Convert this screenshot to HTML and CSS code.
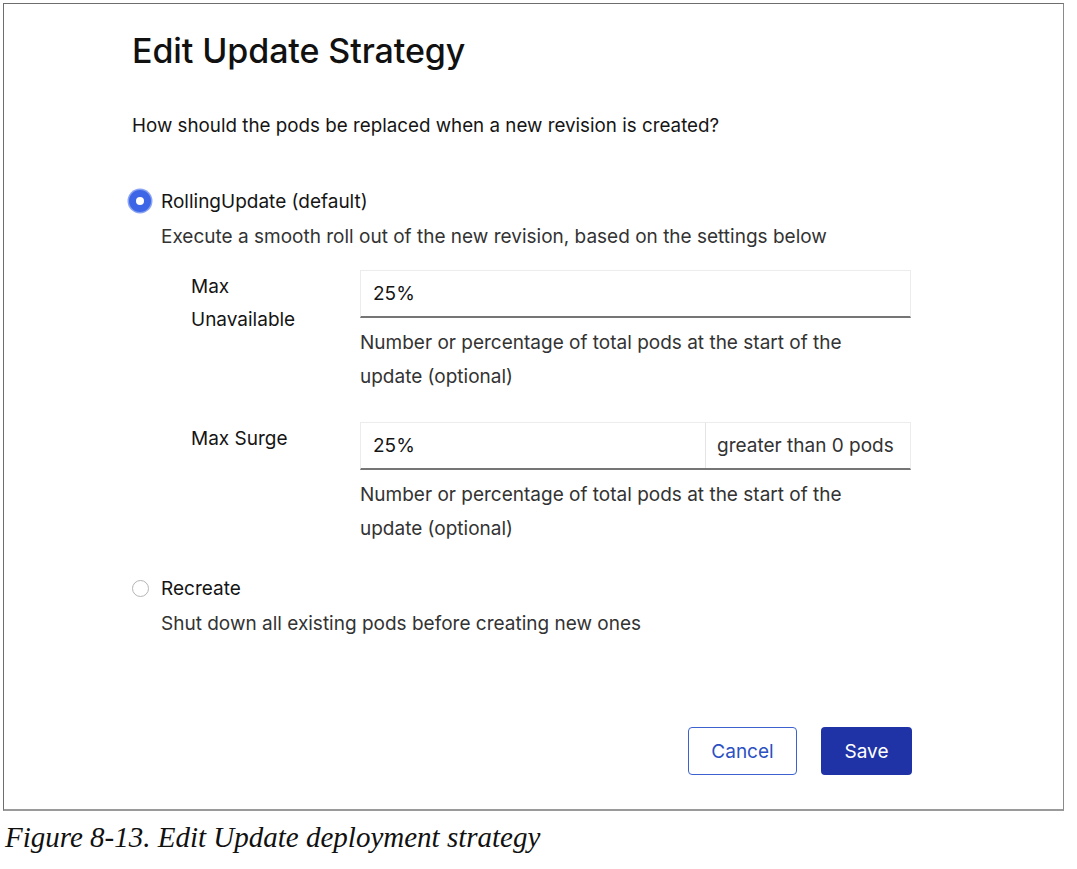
FILE: index.html
```html
<!DOCTYPE html>
<html>
<head>
<meta charset="utf-8">
<link rel="stylesheet" href="styles.css">
</head>
<body>
<div class="frame">
  <div class="modal">
    <h1 class="title">Edit Update Strategy</h1>
    <p class="question">How should the pods be replaced when a new revision is created?</p>

    <div class="option">
      <div class="option-head">
        <span class="radio radio-on"><span class="dot"></span></span>
        <span class="option-label">RollingUpdate (default)</span>
      </div>
      <div class="option-desc">Execute a smooth roll out of the new revision, based on the settings below</div>

      <div class="fields">
        <div class="field">
          <div class="field-label">Max<br>Unavailable</div>
          <div class="field-body">
            <div class="input-group">
              <div class="input">25%</div>
            </div>
            <div class="help">Number or percentage of total pods at the start of the<br>update (optional)</div>
          </div>
        </div>
        <div class="field">
          <div class="field-label">Max Surge</div>
          <div class="field-body">
            <div class="input-group">
              <div class="input">25%</div>
              <div class="addon">greater than 0 pods</div>
            </div>
            <div class="help">Number or percentage of total pods at the start of the<br>update (optional)</div>
          </div>
        </div>
      </div>
    </div>

    <div class="option option-second">
      <div class="option-head">
        <span class="radio radio-off"></span>
        <span class="option-label">Recreate</span>
      </div>
      <div class="option-desc">Shut down all existing pods before creating new ones</div>
    </div>

    <div class="footer">
      <button class="btn btn-secondary">Cancel</button>
      <button class="btn btn-primary">Save</button>
    </div>
  </div>
</div>
<p class="caption">Figure 8-13. Edit Update deployment strategy</p>
</body>
</html>
```

FILE: styles.css
```css
html, body {
  margin: 0;
  padding: 0;
  background: #ffffff;
}

body {
  font-family: "Inter", "Open Sans", sans-serif;
  color: #151515;
}

.frame {
  margin: 3px 0 0 3px;
  width: 1059px;
  height: 805px;
  border: 1px solid #6e6e6e;
  border-bottom: 2px solid #9a9a9a;
  border-right: 1px solid #8a8a8a;
  box-sizing: content-box;
}

.modal {
  padding: 26px 0 0 128px;
  width: 780px;
}

.title {
  margin: 0;
  font-size: 34px;
  font-weight: 500;
  line-height: 42px;
  letter-spacing: -0.1px;
  color: #111;
}

.question {
  margin: 41px 0 0 0;
  font-size: 18.8px;
  line-height: 26px;
  color: #151515;
}

.option {
  margin-top: 49px;
}

.option-second {
  margin-top: 29px;
}

.option-head {
  display: flex;
  align-items: center;
  height: 26px;
}

.radio {
  display: flex;
  align-items: center;
  justify-content: center;
  box-sizing: border-box;
  border-radius: 50%;
  flex: none;
}

.radio-on {
  width: 22px;
  height: 22px;
  margin: 0 10px 0 -3px;
  background: #3c66e6;
  box-shadow: 0 0 0 1.5px #8aa3f2;
}

.radio-on .dot {
  width: 8px;
  height: 8px;
  border-radius: 50%;
  background: #fff;
}

.radio-off {
  width: 17px;
  height: 17px;
  margin: 0 12px 0 0;
  border: 1px solid #b5b5b5;
  background: #fff;
}

.option-label {
  font-size: 19px;
  color: #151515;
}

.option-desc {
  margin: 10px 0 0 29px;
  font-size: 19px;
  line-height: 26px;
  color: #333;
}

.fields {
  margin: 20px 0 0 59px;
  display: flex;
  flex-direction: column;
  gap: 28px;
}

.field {
  display: flex;
}

.field-label {
  width: 169px;
  flex: none;
  font-size: 19px;
  line-height: 33px;
  color: #151515;
}

.field-body {
  width: 551px;
}

.input-group {
  display: flex;
  height: 48px;
  box-sizing: border-box;
  border: 1px solid #ececec;
  border-bottom: 2px solid #757575;
}

.input {
  flex: 1;
  display: flex;
  align-items: center;
  padding-left: 12px;
  font-size: 19px;
  color: #151515;
}

.addon {
  flex: none;
  width: 205px;
  box-sizing: border-box;
  border-left: 1px solid #e4e4e4;
  display: flex;
  align-items: center;
  padding-left: 11px;
  font-size: 19px;
  color: #333;
}

.help {
  margin-top: 8px;
  font-size: 19px;
  line-height: 34px;
  color: #333;
}

.footer {
  display: flex;
  justify-content: flex-end;
  gap: 24px;
  margin-top: 90px;
}

.btn {
  height: 48px;
  border-radius: 4px;
  font-family: "Inter", "Open Sans", sans-serif;
  font-size: 19px;
  padding: 0;
  cursor: pointer;
}

.btn-secondary {
  width: 109px;
  background: #fff;
  color: #2b50c2;
  border: 1.5px solid #3d62cf;
}

.btn-primary {
  width: 91px;
  background: #1f33a6;
  color: #fff;
  border: none;
}

.caption {
  margin: 10px 0 0 5px;
  font-family: "Liberation Serif", serif;
  font-style: italic;
  font-size: 29px;
  color: #111;
}
```
